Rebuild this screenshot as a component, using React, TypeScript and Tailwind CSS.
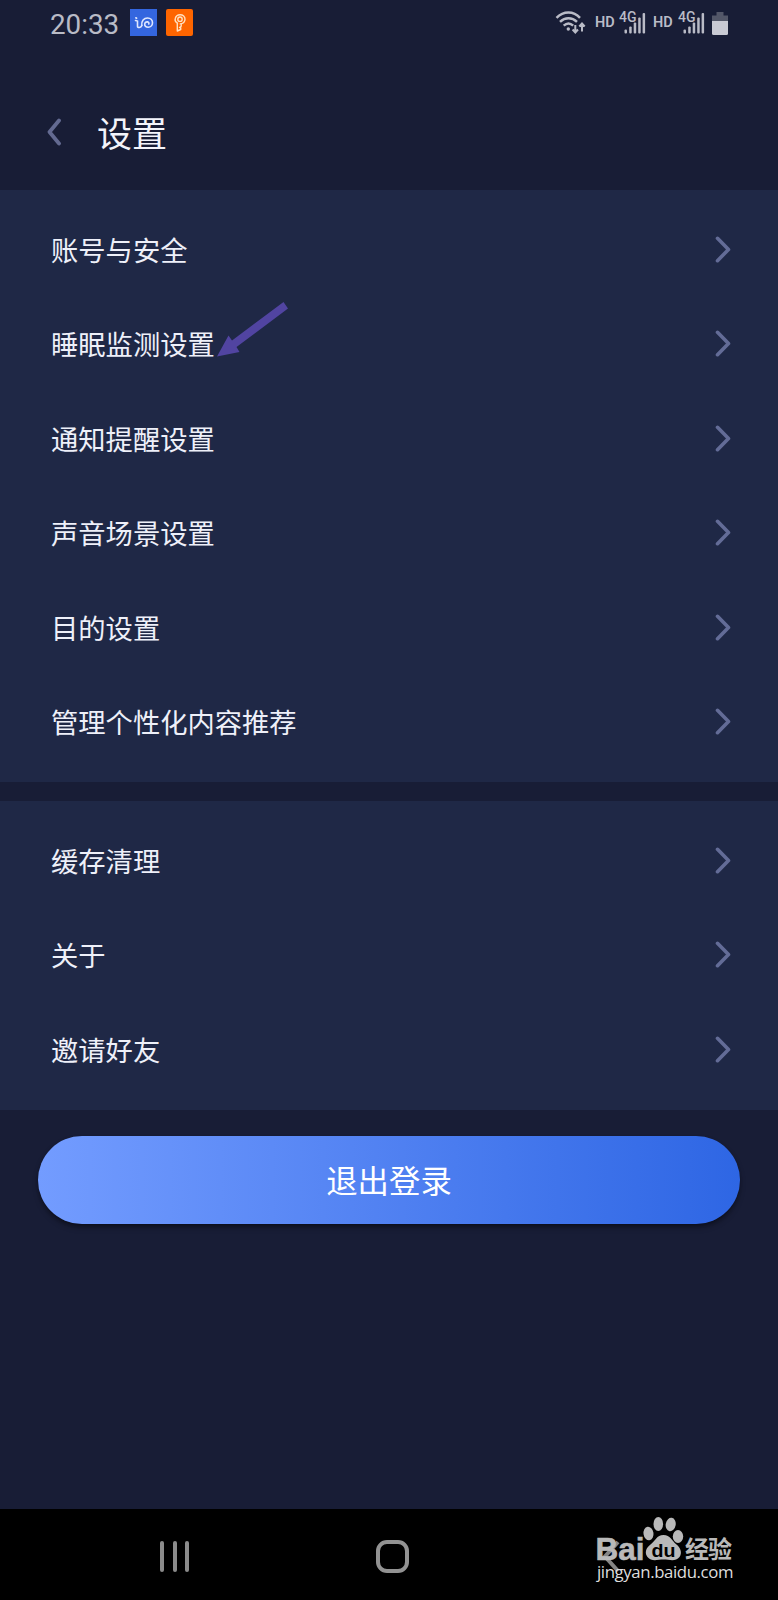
const cjk = "font-['Roboto','Noto_Sans_CJK_SC',sans-serif]";

const mainItems = [
  '账号与安全',
  '睡眠监测设置',
  '通知提醒设置',
  '声音场景设置',
  '目的设置',
  '管理个性化内容推荐',
];

const moreItems = ['缓存清理', '关于', '邀请好友'];

function Signal() {
  return (
    <svg width="27" height="32" viewBox="0 -4 27 32" fill="#b9bbc6">
      <text x="0" y="10.5" fontFamily="Roboto" fontWeight="500" fontSize="14" textLength="17.5">4G</text>
      <rect x="5.5" y="18.500" width="2.500" height="4" rx="1" />
      <rect x="10.200" y="15.500" width="2.500" height="7" rx="1" />
      <rect x="14.700" y="11.500" width="2.500" height="11" rx="1" />
      <rect x="19.200" y="6.500" width="2.500" height="16" rx="1" />
      <rect x="23.600" y="2" width="2.500" height="20.500" rx="1" />
    </svg>
  );
}

function StatusBar() {
  return (
    <div className="flex h-[46px] items-center justify-between pl-[50px] pr-[50px]">
      <div className="flex items-center">
        <span className="w-20 pt-[3px] text-[27.800px] leading-none text-[#b9bbc6]">20:33</span>
        {/* Notification icons */}
        <svg className="mr-[9px]" width="27" height="27" viewBox="0 0 27 27" fill="none">
          <rect width="27" height="27" fill="#3466df" />
          <g stroke="#dfe7ff" strokeWidth="1.6" strokeLinecap="round">
            <path d="M5.800 8.800l.8.500M5.500 11.500l2 .5v5.500c0 1.500 3.500 1.500 4.300-1" />
            <path d="M11.800 16.500c-.6-4.500 2.200-7.500 5.700-7.500 3 0 5 2 5 4.700s-2 4.500-4.300 4.500c-2.200 0-3.700-1.300-3.500-3.200.2-1.500 1.600-2.400 2.800-2.100 1.200.3 1.700 1.200 1.300 2.100" />
          </g>
        </svg>
        <svg width="27" height="27" viewBox="0 0 27 27" fill="none">
          <rect width="27" height="27" rx="2" fill="#fe6500" />
          <g stroke="#ffe0c0" strokeWidth="1.4" strokeLinecap="round" strokeLinejoin="round">
            <path d="M11.500 14.200c-2-1-2.800-2.500-2.300-4.500.6-2.700 2.500-4 4.900-4 2.900 0 5 2 4.900 4.500-.1 2.800-1.800 4.400-4.800 4.700" />
            <path d="M11.300 14.500v7.500l3.400-1.500v-2h-1.200l1.700-1.300v-2.400" />
            <circle cx="14" cy="10.200" r="2.200" />
          </g>
        </svg>
      </div>
      <div className="flex items-center">
        <svg className="mr-[9px]" width="31" height="25" viewBox="0 0 31 25" fill="none" stroke="#b9bbc6">
          <path d="M1.500 6.800C8.500-.2 18.500-.2 25 6.800" strokeWidth="2.500" />
          <path d="M5 10.800c5-4.800 12-4.800 17 0" strokeWidth="2.500" />
          <path d="M8.700 14.700c3-2.800 6.500-2.800 9.500 0" strokeWidth="2.500" />
          <circle cx="13.300" cy="18" r="1.700" fill="#b9bbc6" stroke="none" />
          <path d="M20.300 14v7M17.600 18.500l2.700 3 2.700-3M27 20.500v-7M24.300 15.500l2.700-3 2.700 3" strokeWidth="2" />
        </svg>
        <span className="w-6 text-[14.500px] font-semibold leading-none text-[#b9bbc6]">HD</span>
        <Signal />
        <span className="ml-[7px] w-[25px] text-[14.500px] font-semibold leading-none text-[#b9bbc6]">HD</span>
        <Signal />
        <svg className="ml-[7px]" width="16" height="23" viewBox="0 0 16 23">
          <path d="M4.500 0h7v3.500H16V10H0V3.500h4.500z" fill="#535768" />
          <path d="M0 9h16v12.500a1.500 1.500 0 0 1-1.500 1.500h-13A1.500 1.500 0 0 1 0 21.500z" fill="#c9cad4" />
        </svg>
      </div>
    </div>
  );
}

function SettingsRow({ label }: { label: string }) {
  return (
    <button className="flex h-[94.500px] w-full items-center justify-between pl-[51px] pr-[47px] text-left">
      <span className="pt-1 text-[27.300px] leading-none text-[#eef0f9]">{label}</span>
      <svg className="mb-[2px]" width="16" height="27" viewBox="0 0 16 27" fill="none" stroke="#636c97" strokeWidth="3.600" strokeLinecap="round" strokeLinejoin="round">
        <path d="M2.500 2.300l11 11.200-11 11.200" />
      </svg>
    </button>
  );
}

function Watermark() {
  return (
    <svg className="absolute left-[592px] top-[6px]" width="145" height="80" viewBox="592 1515 145 80">
      <g fill="#b9b9b9">
        <text x="595.500" y="1559.500" fontFamily="Liberation Sans" fontWeight="700" fontSize="31.500" textLength="49" lengthAdjust="spacingAndGlyphs" stroke="#b9b9b9" strokeWidth=".6">Bai</text>
        <ellipse cx="648.500" cy="1533.500" rx="5" ry="6.800" transform="rotate(-8 648.500 1533.500)" />
        <ellipse cx="658.300" cy="1524" rx="4.800" ry="7" />
        <ellipse cx="670.700" cy="1524.500" rx="5" ry="6.800" transform="rotate(10 670.700 1524.500)" />
        <ellipse cx="678" cy="1536.500" rx="5.200" ry="6.500" />
        <path d="M663.500 1535c-7 0-8 6-13 9.500-5 3.500-6 9-3 12.500 4 5 10 2.500 16 2.500s12 2.500 16-2.500c3-4 1-9.500-3-12.500-5-4-6-9.500-13-9.500z" />
        <text x="685" y="1558" fontFamily="Noto Sans CJK SC" fontWeight="700" fontSize="24" textLength="47">经验</text>
        <text x="597" y="1578" fontFamily="Open Sans" fontSize="16.800" textLength="136.500" fill="#dedede">jingyan.baidu.com</text>
      </g>
      <text x="651.500" y="1556.500" fontFamily="Liberation Sans" fontWeight="700" fontSize="19" textLength="24" lengthAdjust="spacingAndGlyphs" fill="#000">du</text>
    </svg>
  );
}

function NavBar() {
  return (
    <div className="relative flex h-[91px] items-center bg-black pl-[160px] pt-1">
      <div className="flex gap-[8.500px]">
        <span className="h-[31px] w-1 rounded-full bg-[#8b8b8b]" />
        <span className="h-[31px] w-1 rounded-full bg-[#8b8b8b]" />
        <span className="h-[31px] w-1 rounded-full bg-[#8b8b8b]" />
      </div>
      <span className="ml-[187px] h-[33px] w-[33px] rounded-[11px] border-4 border-[#929292]" />
      <svg className="ml-[193px]" width="18" height="33" viewBox="0 0 18 33" fill="none" stroke="#858585" strokeWidth="4">
        <path d="M16 2L3 16.500 16 31" />
      </svg>
      <Watermark />
    </div>
  );
}

export default function App() {
  return (
    <div className={`${cjk} flex h-[1600px] w-[778px] flex-col overflow-hidden bg-[#181d36]`}>
      <StatusBar />
      <header className="flex h-[144px] items-center pl-[46px] pt-[30px]">
        <svg className="mb-[2px] mr-[35px]" width="16" height="28" viewBox="0 0 16 28" fill="none" stroke="#636a91" strokeWidth="3.800" strokeLinecap="round" strokeLinejoin="round">
          <path d="M13 2.500L3.500 14 13 25.500" />
        </svg>
        <h1 className="pt-1 text-[35px] leading-none text-[#f3f4fb]">设置</h1>
      </header>

      <section className="relative h-[592px] bg-[#1f2846] pt-[13px]">
        {mainItems.map((label) => (
          <SettingsRow key={label} label={label} />
        ))}
        <svg className="absolute left-[216px] top-[110px]" width="74" height="58" viewBox="0 0 74 58" fill="#5144a1">
          <path d="M1 56.500L12.500 35.500 16 40.500 67.500 2 72 8.500 20.500 47 23.500 52z" />
        </svg>
      </section>

      <section className="mt-[19px] h-[309px] bg-[#1f2846] pt-[13px]">
        {moreItems.map((label) => (
          <SettingsRow key={label} label={label} />
        ))}
      </section>

      <div className="flex-1 px-[38px] pt-[26px]">
        <button className="h-[88px] w-full rounded-full bg-linear-to-r/srgb from-[#739cff] to-[#2e66e4] pt-[5px] text-[31.400px] leading-none text-white shadow-md shadow-black/40">
          退出登录
        </button>
      </div>
      <NavBar />
    </div>
  );
}
